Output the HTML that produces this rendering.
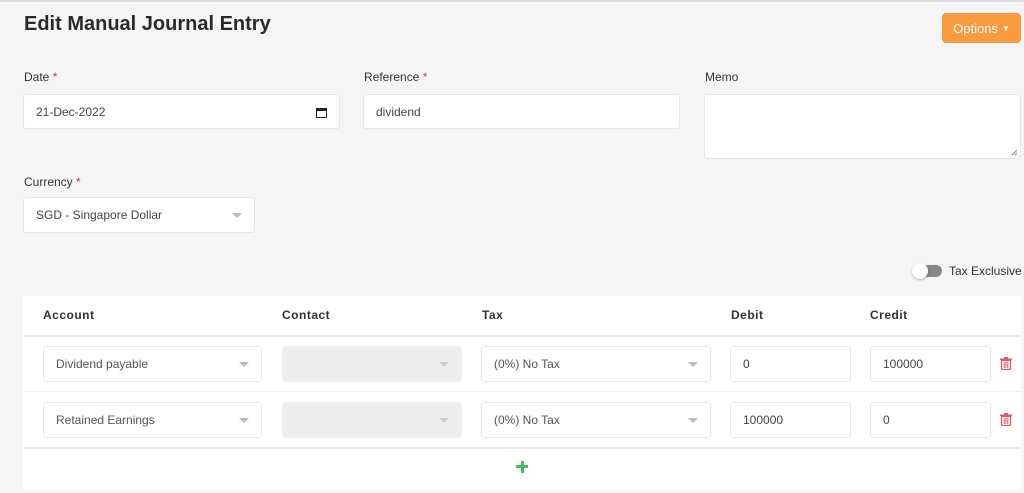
<!DOCTYPE html>
<html><head><style>
*{box-sizing:border-box;margin:0;padding:0}
body{width:1024px;height:493px;background:#f5f5f5;font-family:"Liberation Sans",sans-serif;color:#333;position:relative;overflow:hidden}
.a{position:absolute}
.lbl{font-size:12px;color:#333}
.req{color:#e0303a}
.inp{position:absolute;background:#fff;border:1px solid #e6e6e6;border-radius:3px;font-size:12px;color:#444;padding-left:12px;display:flex;align-items:center}
.car{position:absolute;right:12px;top:50%;margin-top:-2px;width:0;height:0;border-left:5px solid transparent;border-right:5px solid transparent;border-top:5px solid #bbb}
.th{position:absolute;top:308px;font-size:12px;font-weight:bold;color:#333;letter-spacing:.5px}
</style></head><body>
<div class="a" style="left:0;top:0;width:1024px;height:2px;background:#ddd"></div>
<div class="a" style="left:24px;top:13px;font-size:20px;font-weight:bold;color:#2a2a2a">Edit Manual Journal Entry</div>
<div class="a" style="left:942px;top:13px;width:79px;height:30px;background:#fa9a3e;border-radius:4px;color:#fff;font-size:13px;display:flex;align-items:center;justify-content:center">Options <span style="font-size:8px;margin-left:4px">▼</span></div>

<div class="a lbl" style="left:24px;top:70px">Date <span class="req">*</span></div>
<div class="inp" style="left:23px;top:94px;width:317px;height:35px">21-Dec-2022
<svg class="a" style="right:12px;top:12px" width="11" height="11" viewBox="0 0 11 11"><rect x="0.5" y="1.5" width="10" height="9" fill="none" stroke="#222"/><rect x="0.5" y="1.5" width="10" height="2.5" fill="#222"/></svg></div>
<div class="a lbl" style="left:364px;top:70px">Reference <span class="req">*</span></div>
<div class="inp" style="left:363px;top:94px;width:317px;height:35px">dividend</div>
<div class="a lbl" style="left:705px;top:70px">Memo</div>
<div class="inp" style="left:704px;top:94px;width:317px;height:65px">
<svg class="a" style="right:2px;bottom:2px" width="7" height="7" viewBox="0 0 7 7"><path d="M1 6L6 1M4 6L6 4" stroke="#888" stroke-width="1"/></svg></div>

<div class="a lbl" style="left:24px;top:175px">Currency <span class="req">*</span></div>
<div class="inp" style="left:23px;top:197px;width:232px;height:36px">SGD - Singapore Dollar<div class="car"></div></div>

<div class="a" style="left:913px;top:265px;width:29px;height:12px;background:#888;border-radius:6px"></div>
<div class="a" style="left:912px;top:263px;width:16px;height:16px;background:#fff;border-radius:50%;box-shadow:0 1px 2px rgba(0,0,0,.3)"></div>
<div class="a" style="left:949px;top:264px;font-size:12px;color:#333">Tax Exclusive</div>

<div class="a" style="left:23px;top:296px;width:998px;height:194px;background:#fff"></div>
<div class="a" style="left:23px;top:335px;width:998px;height:2px;background:#ececec"></div>
<div class="a" style="left:23px;top:391px;width:998px;height:1px;background:#f0f0f0"></div>
<div class="a" style="left:23px;top:447px;width:998px;height:2px;background:#ececec"></div>
<div class="th" style="left:43px">Account</div>
<div class="th" style="left:282px">Contact</div>
<div class="th" style="left:482px">Tax</div>
<div class="th" style="left:731px">Debit</div>
<div class="th" style="left:870px">Credit</div>

<div class="inp" style="left:43px;top:346px;width:219px;height:36px;color:#555">Dividend payable<div class="car"></div></div>
<div class="inp" style="left:282px;top:346px;width:180px;height:36px;background:#eee;border-color:#eee"><div class="car" style="border-top-color:#ccc"></div></div>
<div class="inp" style="left:481px;top:346px;width:230px;height:36px;color:#555">(0%) No Tax<div class="car"></div></div>
<div class="inp" style="left:730px;top:346px;width:121px;height:36px">0</div>
<div class="inp" style="left:870px;top:346px;width:121px;height:36px">100000</div>

<div class="inp" style="left:43px;top:402px;width:219px;height:36px;color:#555">Retained Earnings<div class="car"></div></div>
<div class="inp" style="left:282px;top:402px;width:180px;height:36px;background:#eee;border-color:#eee"><div class="car" style="border-top-color:#ccc"></div></div>
<div class="inp" style="left:481px;top:402px;width:230px;height:36px;color:#555">(0%) No Tax<div class="car"></div></div>
<div class="inp" style="left:730px;top:402px;width:121px;height:36px">100000</div>
<div class="inp" style="left:870px;top:402px;width:121px;height:36px">0</div>

<svg class="a" style="left:1000px;top:357px" width="12" height="13" viewBox="0 0 12 13"><rect x="0" y="1.5" width="12" height="1.5" fill="#e05a6a"/><rect x="4" y="0" width="4" height="2" fill="#e05a6a"/><path d="M1.5 3.5h9v9h-9z" fill="none" stroke="#e05a6a" stroke-width="1.3"/><path d="M4.2 5v6M6 5v6M7.8 5v6" stroke="#e05a6a" stroke-width="1"/></svg>
<svg class="a" style="left:1000px;top:413px" width="12" height="13" viewBox="0 0 12 13"><rect x="0" y="1.5" width="12" height="1.5" fill="#e05a6a"/><rect x="4" y="0" width="4" height="2" fill="#e05a6a"/><path d="M1.5 3.5h9v9h-9z" fill="none" stroke="#e05a6a" stroke-width="1.3"/><path d="M4.2 5v6M6 5v6M7.8 5v6" stroke="#e05a6a" stroke-width="1"/></svg>

<div class="a" style="left:516px;top:465px;width:12px;height:3px;background:#4cbb5a"></div>
<div class="a" style="left:520.5px;top:460.5px;width:3px;height:12px;background:#4cbb5a"></div>
</body></html>
